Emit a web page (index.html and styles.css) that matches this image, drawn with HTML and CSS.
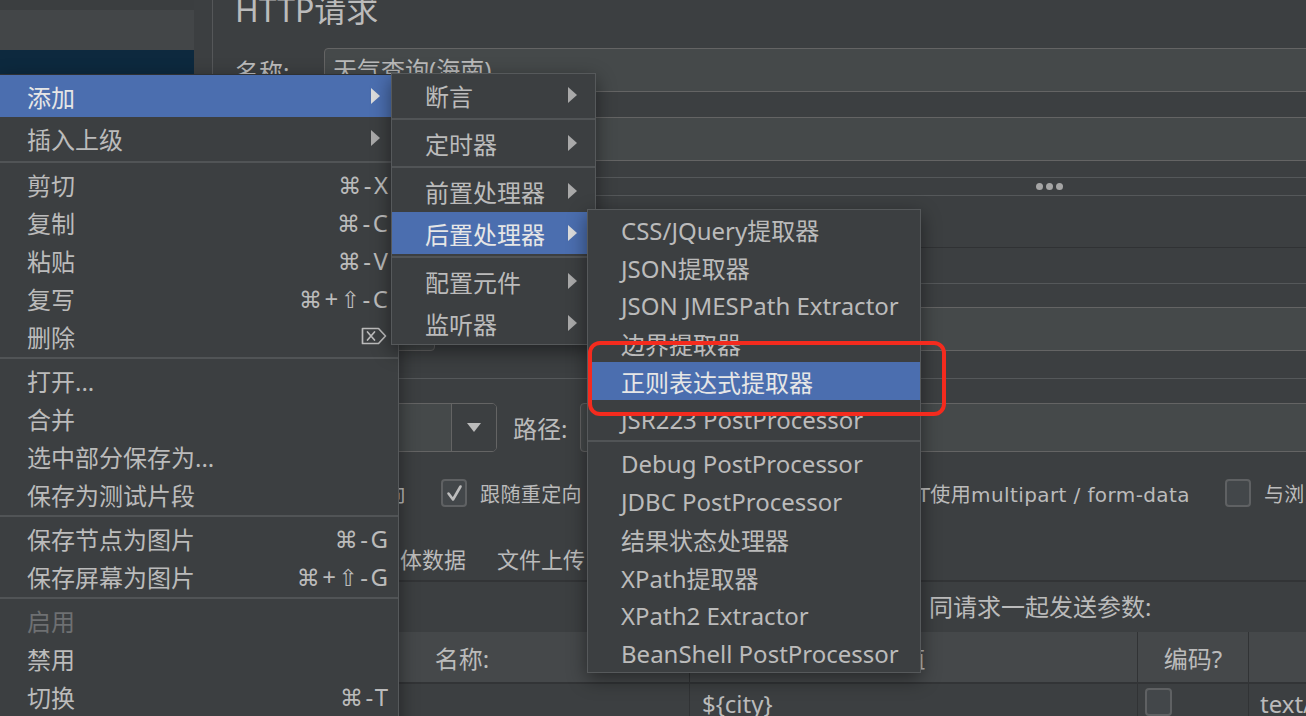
FILE: index.html
```html
<!DOCTYPE html>
<html lang="zh-CN">
<head>
<meta charset="utf-8">
<title>HTTP请求</title>
<link rel="stylesheet" href="styles.css">
</head>
<body>
<div class="app">
  <aside class="tree">
    <div class="tree-row r0"></div>
    <div class="tree-row r1"></div>
    <div class="tree-row sel"></div>
  </aside>
  <div class="splitter"></div>
  <main class="editor">
    <h1 class="title">HTTP请求</h1>
    <div class="field name-field"><span class="flabel">名称:</span><div class="input">天气查询(海南)</div></div>
    <div class="field comment-field"><span class="flabel">注释:</span><div class="input"></div></div>
    <div class="divider"><span class="dot"></span><span class="dot"></span><span class="dot"></span></div>
    <div class="subtabs"></div>
    <section class="group web-group">
      <div class="server-row">
        <span class="slabel">协议:</span><div class="input proto"></div>
        <span class="slabel host-label">服务器名称或IP:</span><div class="input host"></div>
      </div>
    </section>
    <section class="group req-group">
      <div class="method-row">
        <span class="slabel">方法:</span>
        <div class="combo"><span class="combo-val">GET</span><span class="combo-btn"><i class="caret"></i></span></div>
        <span class="path-label">路径:</span>
        <div class="input path"></div>
      </div>
      <div class="checks">
        <div class="cb-item i1"><span class="cb"></span><span>自动重定向</span></div>
        <div class="cb-item i2"><span class="cb"><svg class="tick" viewBox="0 0 26 28" width="26" height="28"><polyline points="7.5,14.5 12,20.5 19.5,7.5" fill="none" stroke="#bdbdbd" stroke-width="2.6" stroke-linecap="round" stroke-linejoin="round"/></svg></span><span>跟随重定向</span></div>
        <div class="cb-item i3"><span class="cb"></span><span>使用 KeepAlive</span></div>
        <div class="cb-item i4"><span class="cb"></span><span>对POST使用multipart / form-data</span></div>
        <div class="cb-item i5"><span class="cb"></span><span>与浏览器兼容的头</span></div>
      </div>
      <div class="tabs">
        <span class="tab">参数</span><span class="tab">消息体数据</span><span class="tab">文件上传</span>
      </div>
      <div class="params-caption">同请求一起发送参数:</div>
      <div class="table">
        <div class="thead">
          <div class="c c1">名称:</div><div class="c c2">值</div><div class="c c3">编码?</div><div class="c c4">内容类型</div><div class="c c5">包含等于?</div>
        </div>
        <div class="trow">
          <div class="c c1 l">city</div><div class="c c2 l">${city}</div><div class="c c3 l"><span class="cb small"></span></div><div class="c c4 l">text/plain</div><div class="c c5"></div>
        </div>
      </div>
    </section>
  </main>
</div>

<div class="menu main-menu">
  <div class="mi sub hl"><span class="txt">添加</span><i class="arrow"></i></div>
  <div class="mi sub"><span class="txt">插入上级</span><i class="arrow"></i></div>
  <div class="sep"></div>
  <div class="mi"><span class="txt">剪切</span><span class="sc"><span class="sym">⌘</span>-X</span></div>
  <div class="mi"><span class="txt">复制</span><span class="sc"><span class="sym">⌘</span>-C</span></div>
  <div class="mi"><span class="txt">粘贴</span><span class="sc"><span class="sym">⌘</span>-V</span></div>
  <div class="mi"><span class="txt">复写</span><span class="sc"><span class="sym">⌘</span>+<span class="sym">⇧</span>-C</span></div>
  <div class="mi"><span class="txt">删除</span><svg class="del" viewBox="0 0 26 18" width="26" height="18"><path d="M1.5 1.5H17.5L24.5 9L17.5 16.5H1.5Z" fill="none" stroke="#bbbbbb" stroke-width="1.7" stroke-linejoin="round"/><path d="M6.5 5L13.5 13M13.5 5L6.5 13" stroke="#bbbbbb" stroke-width="1.7" stroke-linecap="round"/></svg></div>
  <div class="sep"></div>
  <div class="mi"><span class="txt">打开...</span></div>
  <div class="mi"><span class="txt">合并</span></div>
  <div class="mi"><span class="txt">选中部分保存为...</span></div>
  <div class="mi"><span class="txt">保存为测试片段</span></div>
  <div class="sep"></div>
  <div class="mi"><span class="txt">保存节点为图片</span><span class="sc"><span class="sym">⌘</span>-G</span></div>
  <div class="mi"><span class="txt">保存屏幕为图片</span><span class="sc"><span class="sym">⌘</span>+<span class="sym">⇧</span>-G</span></div>
  <div class="sep"></div>
  <div class="mi dis"><span class="txt">启用</span></div>
  <div class="mi"><span class="txt">禁用</span></div>
  <div class="mi"><span class="txt">切换</span><span class="sc"><span class="sym">⌘</span>-T</span></div>
</div>

<div class="menu sub1">
  <div class="mi sub"><span class="txt">断言</span><i class="arrow"></i></div>
  <div class="sep"></div>
  <div class="mi sub"><span class="txt">定时器</span><i class="arrow"></i></div>
  <div class="sep"></div>
  <div class="mi sub"><span class="txt">前置处理器</span><i class="arrow"></i></div>
  <div class="mi sub hl"><span class="txt">后置处理器</span><i class="arrow"></i></div>
  <div class="sep"></div>
  <div class="mi sub"><span class="txt">配置元件</span><i class="arrow"></i></div>
  <div class="mi sub"><span class="txt">监听器</span><i class="arrow"></i></div>
</div>

<div class="menu sub2">
  <div class="mi"><span class="txt">CSS/JQuery提取器</span></div>
  <div class="mi"><span class="txt">JSON提取器</span></div>
  <div class="mi"><span class="txt">JSON JMESPath Extractor</span></div>
  <div class="mi"><span class="txt">边界提取器</span></div>
  <div class="mi hl"><span class="txt">正则表达式提取器</span></div>
  <div class="mi"><span class="txt">JSR223 PostProcessor</span></div>
  <div class="sep"></div>
  <div class="mi"><span class="txt">Debug PostProcessor</span></div>
  <div class="mi"><span class="txt">JDBC PostProcessor</span></div>
  <div class="mi"><span class="txt">结果状态处理器</span></div>
  <div class="mi"><span class="txt">XPath提取器</span></div>
  <div class="mi"><span class="txt">XPath2 Extractor</span></div>
  <div class="mi"><span class="txt">BeanShell PostProcessor</span></div>
</div>

<div class="callout"></div>
</body>
</html>
```

FILE: styles.css
```css
* { box-sizing: border-box; margin: 0; padding: 0; }
html, body { width: 1306px; height: 716px; overflow: hidden; }
body {
  position: relative;
  background: #3c3f41;
  color: #bbbbbb;
  font-family: "Noto Sans", "Noto Sans CJK SC", sans-serif;
  font-size: 24px;
}

.app { display: flex; height: 716px; width: 2000px; align-items: flex-start; }

/* tree */
.tree { width: 194px; height: 716px; flex: none; display: flex; flex-direction: column; background: #3c3f41; }
.tree-row { flex: none; }
.tree-row.r0 { height: 10px; background: #3b3e40; }
.tree-row.r1 { height: 40px; background: #434648; }
.tree-row.sel { height: 24px; background: #0d293e; }
.splitter { width: 19px; height: 716px; flex: none; border-right: 1px solid #555759; }

/* editor */
.editor { width: 1664px; flex: none; padding: 0 22px; display: flex; flex-direction: column; }
.editor > *, .group > *, .table > * { flex-shrink: 0; }
.title {
  font-size: 32px; line-height: 32px; font-weight: normal;
  margin-top: -6px; color: #bbbbbb;
}
.field { display: flex; align-items: center; height: 44px; }
.name-field { margin-top: 22px; }
.comment-field { margin-top: 25px; }
.flabel { width: 89px; flex: none; }
.input {
  flex: 1; height: 44px; border: 1px solid #646464; border-radius: 4px;
  background: #45494a; padding-left: 8px; line-height: 42px; white-space: nowrap;
}
.divider {
  margin-top: 16px; height: 19px;
  border-top: 1px solid #55585a; border-bottom: 1px solid #55585a;
  display: flex; align-items: center; justify-content: center; gap: 3px;
  padding-left: 8px;
}
.dot { width: 7px; height: 7px; border-radius: 50%; background: #a5a5a5; }
.subtabs { height: 52px; border-bottom: 1px solid #303234; }

.group { border-top: 1px solid #55585a; display: flex; flex-direction: column; }
.web-group { margin-top: 35px; padding: 23px 0 27px; }
.req-group { padding-top: 24px; }
.server-row, .method-row { display: flex; align-items: center; }
.server-row { height: 44px; }
.slabel { width: 65px; flex: none; }
.input.proto { flex: none; width: 135px; }
.host-label { width: auto; margin: 0 16px 0 24px; }

.method-row { height: 49px; }
.combo {
  width: 197px; height: 49px; flex: none; display: flex;
  border: 1px solid #646464; border-radius: 5px; overflow: hidden;
}
.combo-val { flex: 1; background: #45494a; padding-left: 8px; line-height: 47px; }
.combo-btn {
  width: 45px; border-left: 1px solid #646464; background: #3c3f41;
  display: flex; align-items: center; justify-content: center;
}
.caret {
  width: 0; height: 0; border-top: 9px solid #bbbbbb;
  border-left: 7.5px solid transparent; border-right: 7.5px solid transparent;
}
.path-label { width: 67px; margin-left: 16px; flex: none; }
.input.path { height: 49px; }

.checks {
  margin-top: 27px; height: 28px; display: flex; align-items: center;
  font-family: "DejaVu Sans", "Noto Sans CJK SC", sans-serif; font-size: 20px;
  letter-spacing: 0.4px; white-space: nowrap;
}
.cb-item { display: flex; align-items: center; gap: 13px; flex: none; }
.cb-item.i1 { margin-left: 30px; }
.cb-item.i2 { margin-left: 35px; }
.cb-item.i3 { margin-left: 35px; }
.cb-item.i4 { margin-left: 11px; }
.cb-item.i5 { margin-left: 35px; }
.cb {
  width: 26px; height: 28px; flex: none; display: block;
  border: 2px solid #5f6163; border-radius: 4px; background: #43474a;
  position: relative;
}
.cb .tick { position: absolute; left: -2px; top: -2px; }
.cb.small { width: 27px; height: 28px; }

.tabs { margin-top: 28px; height: 47px; border-bottom: 2px solid #323436; display: flex; align-items: center; font-size: 22px; padding-left: 46px; gap: 31px; }
.params-caption { height: 50px; line-height: 50px; padding-left: 694px; white-space: nowrap; }

.table { display: flex; flex-direction: column; }
.thead, .trow { display: flex; }
.thead { height: 52px; background: #45484a; border-bottom: 2px solid #323436; }
.trow { height: 38px; }
.c {
  flex: none; border-right: 1px solid #313335;
  display: flex; align-items: center; justify-content: center; white-space: nowrap;
}
.c.l { justify-content: flex-start; }
.c1 { width: 455px; }
.c2 { width: 448px; }
.c3 { width: 111px; }
.c4 { width: 320px; }
.c5 { width: 160px; }
.trow .c1 { padding-left: 12px; }
.trow .c2 { padding-left: 12px; }
.trow .c3 { padding-left: 7px; align-items: flex-start; padding-top: 4px; }
.trow .c4 { padding-left: 11px; }

/* menus */
.menu {
  position: absolute; background: #3c3f41; border: 1px solid #56595b;
  box-shadow: 0 6px 18px rgba(0, 0, 0, 0.45);
  font-size: 24px; color: #bbbbbb;
}
.main-menu { left: -1px; top: 74px; width: 400px; height: 660px; border-top-color: #2e3032; }
.sub1 { left: 391px; top: 73px; width: 205px; }
.sub2 { left: 587px; top: 209px; width: 334px; }

.mi { display: flex; align-items: center; height: 38px; padding: 0 10px 0 27px; white-space: nowrap; }
.sub1 .mi, .sub2 .mi { padding-left: 33px; }
.mi.sub { height: 42px; }
.mi .txt { flex: 1; }
.mi.hl { background: #4b6eaf; color: #e6e6e6; }
.mi.dis { color: #6e7072; }
.arrow {
  width: 0; height: 0; margin-right: 8px;
  border-left: 9px solid #a9a9a9; border-top: 8px solid transparent; border-bottom: 8px solid transparent;
}
.mi.hl .arrow { border-left-color: #dcdcdc; }
.sep { height: 6px; display: flex; align-items: center; }
.sep::before { content: ""; flex: 1; height: 2px; background: #515456; }

.sc { font-size: 24px; letter-spacing: 2.5px; margin-right: -2.5px; }
.sym { font-family: "DejaVu Sans", sans-serif; font-size: 23px; }
.del { display: block; margin-right: 1px; }

.callout {
  position: absolute; left: 588px; top: 341px; width: 358px; height: 75px;
  border: 4px solid #f42b1e; border-radius: 12px;
}
```
